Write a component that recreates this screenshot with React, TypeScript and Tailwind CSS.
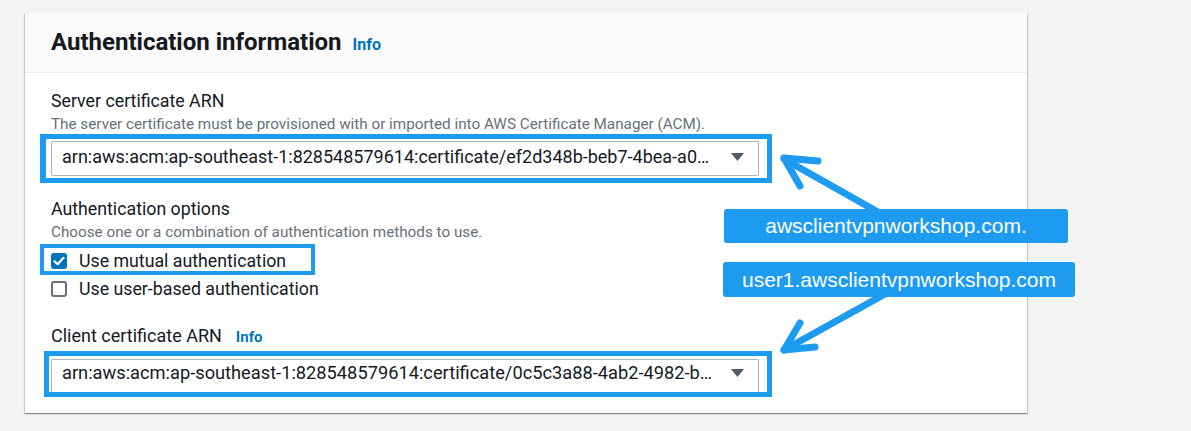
const SELECT_1 =
  "arn:aws:acm:ap-southeast-1:828548579614:certificate/ef2d348b-beb7-4bea-a0…";
const SELECT_2 =
  "arn:aws:acm:ap-southeast-1:828548579614:certificate/0c5c3a88-4ab2-4982-b…";

function Caret() {
  return (
    <svg width="13" height="8" viewBox="0 0 13 8" className="shrink-0">
      <path d="M0 0 H13 L6.5 8 Z" fill="#545b64" />
    </svg>
  );
}

function Checkbox({ checked }: { checked: boolean }) {
  if (checked) {
    return (
      <span className="flex h-[16px] w-[16px] shrink-0 items-center justify-center rounded-[3px] bg-[#0073bb]">
        <svg width="12" height="10" viewBox="0 0 12 10">
          <path
            d="M1.5 5.2 L4.6 8.2 L10.5 1.8"
            fill="none"
            stroke="#fff"
            strokeWidth="2.2"
            strokeLinecap="round"
            strokeLinejoin="round"
          />
        </svg>
      </span>
    );
  }
  return (
    <span className="h-[16px] w-[16px] shrink-0 rounded-[3px] border-2 border-[#687078] bg-white" />
  );
}

function Annotations() {
  return (
    <>
      <svg
        className="pointer-events-none absolute left-0 top-0"
        width="1191"
        height="431"
        viewBox="0 0 1191 431"
      >
        <g
          fill="none"
          stroke="#1d9bf0"
          strokeWidth="7"
          strokeLinecap="round"
          strokeLinejoin="round"
        >
          <path d="M784 159 L885 216" />
          <path d="M818 161 L784 158 L800 186" />
          <path d="M784 350 L885 294" />
          <path d="M800 323 L784 350 L815 347" />
        </g>
      </svg>
      <div className="absolute left-[724px] top-[209px] flex h-[34px] w-[344px] items-center justify-center rounded-[3px] bg-[#1d9bf0] font-['Liberation_Sans',Arial,sans-serif] text-[21px] text-white">
        awsclientvpnworkshop.com.
      </div>
      <div className="absolute left-[723px] top-[262px] flex h-[35px] w-[352px] items-center justify-center rounded-[3px] bg-[#1d9bf0] font-['Liberation_Sans',Arial,sans-serif] text-[21px] text-white">
        user1.awsclientvpnworkshop.com
      </div>
    </>
  );
}

export default function App() {
  return (
    <div className="relative h-[431px] w-[1191px] overflow-hidden bg-[#f2f3f3] pl-[25px] pt-[13px] font-['Roboto',sans-serif] text-[#16191f]">
      <div className="w-[1002px] bg-white shadow-[0_1px_1px_0_rgba(0,28,36,0.3),1px_1px_1px_0_rgba(0,28,36,0.15),-1px_1px_1px_0_rgba(0,28,36,0.15)]">
        <div className="flex h-[60px] items-center border-b border-[#eaeded] bg-[#fafafa] pb-[2px] pl-[26px]">
          <div className="flex items-baseline gap-[11px]">
            <h2 className="text-[24px] font-bold leading-[30px]">
              Authentication information
            </h2>
            <span className="text-[16px] font-bold text-[#0073bb]">Info</span>
          </div>
        </div>

        <div className="flex flex-col pb-[16px] pl-[26px] pt-[17px]">
          <div className="text-[17.75px] leading-[22px]">Server certificate ARN</div>
          <div className="mt-[3px] text-[15.25px] leading-[19px] text-[#687078]">
            The server certificate must be provisioned with or imported into AWS
            Certificate Manager (ACM).
          </div>
          <div className="-ml-[11px] w-fit border-[5px] border-l-[6px] border-[#1d9bf0] bg-white pb-[2px] pl-[5px] pr-[8px] pt-[2px]">
            <div className="flex h-[35px] w-[708px] items-center justify-between rounded-[2px] border border-[#aab7b8] pb-[4px] pl-[10px] pr-[14px]">
              <span className="whitespace-nowrap text-[18px]">{SELECT_1}</span>
              <Caret />
            </div>
          </div>

          <div className="mt-[15px] text-[17.75px] leading-[22px]">Authentication options</div>
          <div className="mt-[3px] text-[15.25px] leading-[19px] text-[#687078]">
            Choose one or a combination of authentication methods to use.
          </div>
          <div className="-ml-[11px] mt-[2px] w-fit border-[4px] border-[#1d9bf0] pb-0 pl-[7px] pr-[25px] pt-[3px]">
            <label className="flex h-[20px] items-center gap-[12px] text-[17.75px] leading-[20px]">
              <Checkbox checked />
              <span>Use mutual authentication</span>
            </label>
          </div>
          <label className="mt-[4px] flex h-[20px] items-center gap-[12px] text-[17.75px] leading-[20px]">
            <Checkbox checked={false} />
            <span>Use user-based authentication</span>
          </label>

          <div className="mt-[26px] flex items-baseline gap-[14px]">
            <span className="text-[18px] leading-[22px]">Client certificate ARN</span>
            <span className="text-[15px] font-bold text-[#0073bb]">Info</span>
          </div>
          <div className="-ml-[7px] mt-[2px] w-fit border-[5px] border-[#1d9bf0] bg-white pb-0 pl-[2px] pr-[8px] pt-[3px]">
            <div className="flex h-[33px] w-[708px] items-center justify-between rounded-t-[2px] border border-b-0 border-[#aab7b8] pb-[6px] pl-[10px] pr-[14px]">
              <span className="whitespace-nowrap text-[18.25px]">{SELECT_2}</span>
              <Caret />
            </div>
          </div>
        </div>
      </div>
      <Annotations />
    </div>
  );
}
